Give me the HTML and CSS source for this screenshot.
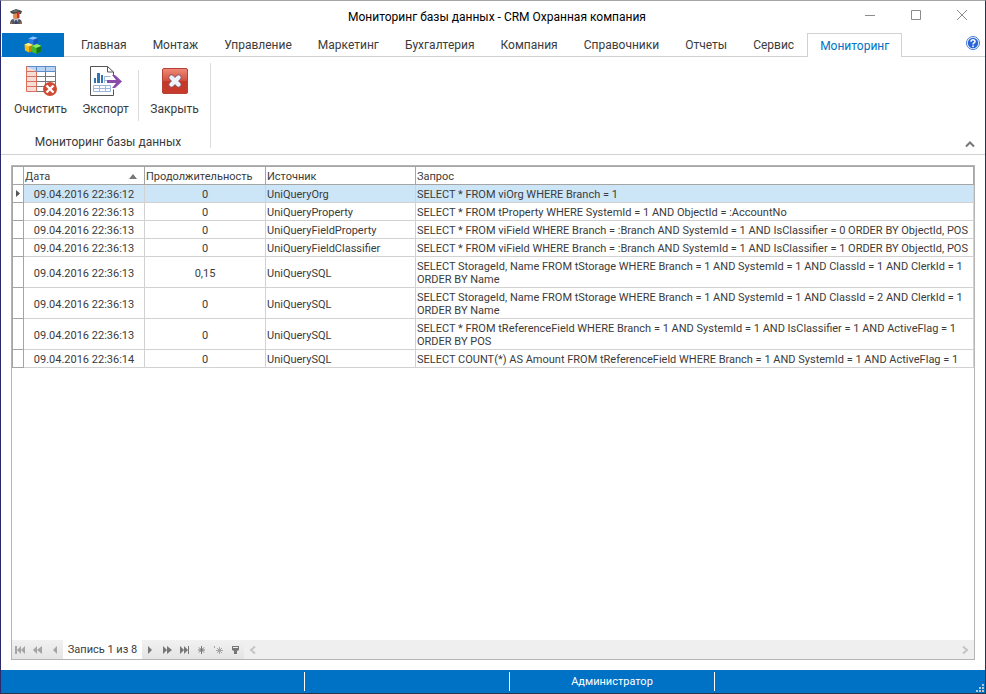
FILE: index.html
```html
<!DOCTYPE html>
<html lang="ru">
<head>
<meta charset="utf-8">
<title>Мониторинг базы данных - CRM Охранная компания</title>
<link rel="stylesheet" href="styles.css">
</head>
<body>
<div class="window">
  <header class="titlebar">
    <svg class="app-icon" width="14" height="16" viewBox="0 0 14 16" aria-hidden="true">
      <path d="M1 15c0-4 2-5.500 6-5.500s6 1.500 6 5.500z" fill="#585860"/>
      <path d="M4 9.500h6L7 15z" fill="#b8c4e0"/><path d="M6.300 11h1.400l.5 4H5.800z" fill="#30406c"/>
      <path d="M1 13h2v2H1zM11 13h2v2h-2z" fill="#8a6c5c"/>
      <rect x="4" y="4" width="6" height="6" rx="2.500" fill="#e58a56"/>
      <path d="M8 4h2.500v5H8z" fill="#c03a20"/>
      <path d="M1 2.500 7 0l6 2-1 3-4-.8-4 .8-2-1z" fill="#484848"/>
      <path d="M3 2.500 7 1l3 1-4 1z" fill="#777"/>
      <path d="M9 3h2v2H9z" fill="#e03020"/>
    </svg>
    <h1 class="title">Мониторинг базы данных - CRM Охранная компания</h1>
    <div class="window-controls">
      <button type="button" aria-label="Свернуть"><svg width="12" height="12" viewBox="0 0 12 12"><path d="M1 6.500h10"/></svg></button>
      <button type="button" aria-label="Развернуть"><svg width="12" height="12" viewBox="0 0 12 12"><path d="M1.500 1.500h9v9h-9z"/></svg></button>
      <button type="button" aria-label="Закрыть окно"><svg width="12" height="12" viewBox="0 0 12 12"><path d="m1 1 10 10M11 1 1 11"/></svg></button>
    </div>
  </header>

  <nav class="tabs">
    <button type="button" class="app-button" aria-label="Меню">
      <svg width="18" height="18" viewBox="0 0 18 18">
        <path d="m4.500 2.500 4.500-2 5 1.500.5 5-5 2-4.500-2z" fill="#2879df"/><path d="m4.500 2.500 4.500-2 5 1.500-4.500 1.800z" fill="#8ac2ff"/><path d="M9.500 3.800 14 2l.5 5-5 2z" fill="#1457bb"/>
        <path d="m.5 8.500 4-1.500 4.500 2v5.500l-4 2-4-2z" fill="#f3bd18"/><path d="m.5 8.500 4-1.500L9 9l-4 1.500z" fill="#fff08a"/><path d="m5 10.500 4-1.500v5.500l-4 2z" fill="#bd8209"/>
        <path d="M8 10 13 8l4.500 2v5l-5 3L8 16z" fill="#42b830"/><path d="M8 10 13 8l4.500 2-5 2z" fill="#8bea6a"/><path d="m12.500 12 5-2v5l-5 3z" fill="#137418"/>
      </svg>
    </button>
    <div class="tab-list">
      <button type="button" class="tab">Главная</button>
      <button type="button" class="tab">Монтаж</button>
      <button type="button" class="tab">Управление</button>
      <button type="button" class="tab">Маркетинг</button>
      <button type="button" class="tab">Бухгалтерия</button>
      <button type="button" class="tab">Компания</button>
      <button type="button" class="tab">Справочники</button>
      <button type="button" class="tab">Отчеты</button>
      <button type="button" class="tab">Сервис</button>
      <button type="button" class="tab active">Мониторинг</button>
    </div>
    <button type="button" class="help" aria-label="Справка">
      <svg width="14" height="14" viewBox="0 0 14 14"><circle cx="7" cy="7" r="6.500" fill="#fff" stroke="#4478d8"/><circle cx="7" cy="7" r="5.200" fill="#2865d6"/><path d="M5 5.800C5 3.200 9.200 3.300 9 5.600 8.900 7 7 6.900 7 8.500" fill="none" stroke="#fff" stroke-width="1.500"/><path d="M6.200 9.500h1.600V11H6.200z" fill="#fff"/></svg>
    </button>
  </nav>

  <section class="ribbon">
    <div class="group">
      <div class="actions">
        <button type="button" class="action">
          <svg width="32" height="32" viewBox="0 0 32 32">
            <path d="M1.500 1.500h29v25h-29z" fill="#fff"/>
            <path d="M1 1h10v25H1z" fill="#f8ddd6"/><path d="M1 1h30v5H11z" fill="#b9d3f3"/>
            <path d="M11 11.500h20M11 16.500h20M11 21.500h20M11 26.500h10M20.500 6v20M30.500 6v15" fill="none" stroke="#777"/>
            <path d="M2 1.500h28.500v5H11M11.500 1.500v5M20.500 1.500v5" fill="none" stroke="#5b8dcc"/>
            <path d="M1.500 1v25.500h10v-20M1 6.500h10M1 11.500h10M1 16.500h10M1 21.500h10" fill="none" stroke="#d9705f"/>
            <circle cx="25" cy="24" r="7" fill="#d04a32"/><path d="m21.500 20.500 7 7m0-7-7 7" stroke="#fff" stroke-width="2.400"/>
          </svg>
          <span>Очистить</span>
        </button>
        <button type="button" class="action">
          <svg width="32" height="32" viewBox="0 0 32 32">
            <path d="M23.500 11V7l-6-5.500H.5v29h23v-6M17.500 1.500V7h6" fill="none" stroke="#555"/>
            <path d="M4 13h2v5H4zM7 8h3v10H7zM11 10h2v8h-2z" fill="#2f75b5"/>
            <path d="M3.500 20.500h17v6h-17zM3.500 23.500h17M9.500 20.500v6M15.500 20.500v6M14.500 18v-6.500h6M14.500 15.500h4" fill="none" stroke="#9bb5dc"/>
            <path d="M17 15h9l-4-5h3l7 6.500-7 6.500h-3l4-5h-9z" fill="#8b4bad"/>
          </svg>
          <span>Экспорт</span>
        </button>
        <div class="separator"></div>
        <button type="button" class="action">
          <svg width="32" height="32" viewBox="0 0 32 32">
            <defs><linearGradient id="red" x2="0" y2="1"><stop stop-color="#ef8b79"/><stop offset=".48" stop-color="#d3503f"/><stop offset=".52" stop-color="#c43729"/><stop offset="1" stop-color="#c73c2c"/></linearGradient></defs>
            <rect x="3.500" y="3.500" width="25" height="25" rx="1.500" fill="url(#red)" stroke="#b74134"/>
            <path d="m12.500 12.500 7 7m0-7-7 7" stroke="#8c5a66" stroke-width="6" stroke-linecap="round"/>
            <path d="m12.500 12.500 7 7m0-7-7 7" stroke="#eef2fb" stroke-width="4.400" stroke-linecap="round"/>
          </svg>
          <span>Закрыть</span>
        </button>
      </div>
      <div class="group-name">Мониторинг базы данных</div>
    </div>
    <button type="button" class="collapse" aria-label="Свернуть ленту"><svg width="10" height="8" viewBox="0 0 10 8"><path d="m1 6.500 4-4 4 4" fill="none" stroke="#777" stroke-width="2"/></svg></button>
  </section>

  <main class="content">
    <div class="grid">
      <table>
        <colgroup><col class="c-mark"><col class="c-date"><col class="c-time"><col class="c-source"><col></colgroup>
        <thead>
          <tr><th></th><th><div class="sorted">Дата<svg width="8" height="5" viewBox="0 0 8 5"><path d="m4 0 4 5H0z" fill="#777"/></svg></div></th><th>Продолжительность</th><th>Источник</th><th>Запрос</th></tr>
        </thead>
        <tbody>
          <tr class="selected"><td><svg width="4" height="7" viewBox="0 0 4 7"><path d="m0 0 4 3.500L0 7z" fill="#555"/></svg></td><td>09.04.2016 22:36:12</td><td>0</td><td>UniQueryOrg</td><td>SELECT * FROM viOrg WHERE Branch = 1</td></tr>
          <tr><td></td><td>09.04.2016 22:36:13</td><td>0</td><td>UniQueryProperty</td><td>SELECT * FROM tProperty WHERE SystemId = 1 AND ObjectId = :AccountNo</td></tr>
          <tr><td></td><td>09.04.2016 22:36:13</td><td>0</td><td>UniQueryFieldProperty</td><td>SELECT * FROM viField WHERE Branch = :Branch AND SystemId = 1 AND IsClassifier = 0 ORDER BY ObjectId, POS</td></tr>
          <tr><td></td><td>09.04.2016 22:36:13</td><td>0</td><td>UniQueryFieldClassifier</td><td>SELECT * FROM viField WHERE Branch = :Branch AND SystemId = 1 AND IsClassifier = 1 ORDER BY ObjectId, POS</td></tr>
          <tr><td></td><td>09.04.2016 22:36:13</td><td>0,15</td><td>UniQuerySQL</td><td>SELECT StorageId, Name FROM tStorage WHERE Branch = 1 AND SystemId = 1 AND ClassId = 1 AND ClerkId = 1<br>ORDER BY Name</td></tr>
          <tr><td></td><td>09.04.2016 22:36:13</td><td>0</td><td>UniQuerySQL</td><td>SELECT StorageId, Name FROM tStorage WHERE Branch = 1 AND SystemId = 1 AND ClassId = 2 AND ClerkId = 1<br>ORDER BY Name</td></tr>
          <tr><td></td><td>09.04.2016 22:36:13</td><td>0</td><td>UniQuerySQL</td><td>SELECT * FROM tReferenceField WHERE Branch = 1 AND SystemId = 1 AND IsClassifier = 1 AND ActiveFlag = 1<br>ORDER BY POS</td></tr>
          <tr><td></td><td>09.04.2016 22:36:14</td><td>0</td><td>UniQuerySQL</td><td>SELECT COUNT(*) AS Amount FROM tReferenceField WHERE Branch = 1 AND SystemId = 1 AND ActiveFlag = 1</td></tr>
        </tbody>
      </table>
      <div class="navigator">
        <div class="nav-buttons">
          <button type="button" disabled aria-label="Первая"><svg width="11" height="8" viewBox="0 0 11 8"><path d="M0 0h2v8H0zM6 0v8L2 4zM10 0v8L6 4z"/></svg></button>
          <button type="button" disabled aria-label="Предыдущая страница"><svg width="11" height="8" viewBox="0 0 11 8"><path d="M5 0v8L1 4zM10 0v8L5 4z"/></svg></button>
          <button type="button" disabled aria-label="Предыдущая"><svg width="11" height="8" viewBox="0 0 11 8"><path d="M8 0v8L4 4z"/></svg></button>
        </div>
        <div class="record">Запись 1 из 8</div>
        <div class="nav-buttons">
          <button type="button" aria-label="Следующая"><svg width="11" height="8" viewBox="0 0 11 8"><path d="M3 0v8l4-4z"/></svg></button>
          <button type="button" aria-label="Следующая страница"><svg width="11" height="8" viewBox="0 0 11 8"><path d="M1 0v8l4-4zM5 0v8l5-4z"/></svg></button>
          <button type="button" aria-label="Последняя"><svg width="11" height="8" viewBox="0 0 11 8"><path d="M1 0v8l4-4zM5 0v8l4-4zM9 0h1v8H9z"/></svg></button>
          <button type="button" aria-label="Сохранить закладку"><svg width="11" height="8" viewBox="0 0 11 8"><path d="M5.500 0v8M2 4h7M3 1.500l5 5M8 1.500l-5 5" class="line"/></svg></button>
          <button type="button" disabled aria-label="Перейти к закладке"><svg width="11" height="8" viewBox="0 0 11 8"><path d="M6.500 1v7M3 4.500h7M4 2l5 5M9 2 4 7M1.500 0v2" class="line"/></svg></button>
          <button type="button" aria-label="Фильтр"><svg width="11" height="8" viewBox="0 0 11 8"><path d="M2 0h7v4L7 5v3H4V5L2 4zM3 1v1h5V1z" fill-rule="evenodd"/></svg></button>
        </div>
        <div class="scrollbar">
          <button type="button" disabled aria-label="Прокрутить влево"><svg width="7" height="8" viewBox="0 0 7 8"><path d="M6 .5 2 4l4 3.500" class="chevron"/></svg></button>
          <button type="button" disabled aria-label="Прокрутить вправо"><svg width="7" height="8" viewBox="0 0 7 8"><path d="M1 .5 5 4 1 7.500" class="chevron"/></svg></button>
        </div>
      </div>
    </div>
  </main>

  <footer class="status">
    <div class="panel wide"></div>
    <div class="panel"></div>
    <div class="panel">Администратор</div>
    <svg class="grip" width="9" height="9" viewBox="0 0 9 9" aria-hidden="true"><path d="M6 0h2v2H6zM3 3h2v2H3zM6 3h2v2H6zM0 6h2v2H0zM3 6h2v2H3zM6 6h2v2H6z" fill="#b9c6d3"/></svg>
  </footer>
</div>
</body>
</html>
```
FILE: styles.css
```css
* { box-sizing: border-box; }
body {
  margin: 0;
  font-family: Roboto, "Noto Sans", sans-serif;
  font-size: 12px;
  color: #3b3b3b;
}
button {
  margin: 0;
  padding: 0;
  border: 0;
  background: none;
  font: inherit;
  color: inherit;
}
svg { display: block; flex: none; }

.window {
  display: flex;
  flex-direction: column;
  min-height: 100vh;
  background: #fff;
  border: 1px solid #2b2b6b;
  border-top-color: #a5a5a5;
  border-right-color: #28344c;
  border-bottom-color: #28344c;
}

.titlebar {
  display: grid;
  grid-template-columns: 1fr auto 1fr;
  align-items: center;
  height: 32px;
  padding-left: 8px;
}
.title {
  margin: 0;
  font-size: 12px;
  font-weight: 400;
  line-height: 16px;
  color: #000;
}
.window-controls {
  display: flex;
  align-self: start;
  justify-content: flex-end;
}
.window-controls button {
  display: grid;
  place-items: center;
  width: 46px;
  height: 28px;
}
.window-controls path { fill: none; stroke: #8c8c8c; }

.tabs {
  display: flex;
  height: 24px;
  padding-left: 1px;
  box-shadow: inset 0 -1px #d2d2d2;
}
.app-button {
  display: grid;
  place-items: center;
  width: 62px;
  background: #0072c6;
}
.tab-list { display: flex; flex: 1; padding-left: 4px; }
.tab { padding: 0 13px; line-height: 24px; }
.tab.active {
  padding: 0 12px;
  border: 1px solid #d2d2d2;
  border-bottom: 0;
  background: #fff;
  color: #0072c6;
}
.help { padding-right: 5px; align-self: flex-start; padding-top: 3px; }

.ribbon {
  display: flex;
  justify-content: space-between;
  height: 98px;
  padding: 6px 10px 6px 5px;
  border-bottom: 1px solid #d2d2d2;
}
.group {
  display: flex;
  flex-direction: column;
  justify-content: space-between;
  width: 205px;
  border-right: 1px solid #dcdcdc;
}
.actions { display: flex; align-items: flex-end; padding-left: 2px; }
.action {
  display: flex;
  flex-direction: column;
  align-items: center;
  gap: 4px;
  width: 65px;
  padding: 2px 0 4px;
  line-height: 16px;
}
.separator {
  width: 1px;
  height: 51px;
  margin-right: 3px;
  background: #dcdcdc;
}
.group-name { text-align: center; line-height: 12px; }
.collapse { align-self: flex-end; }

.content { display: flex; flex: 1; padding: 10px; }
.grid {
  display: flex;
  flex: 1;
  flex-direction: column;
  justify-content: space-between;
  min-width: 0;
  border: 1px solid #b4b4b4;
  font-size: 11px;
  line-height: 13px;
}
table {
  width: 100%;
  table-layout: fixed;
  border-collapse: collapse;
}
.c-mark { width: 11px; }
.c-date, .c-time { width: 121px; }
.c-source { width: 150px; }
th, td {
  padding: 3px 1px 1px;
  border: 1px solid #d2d2d2;
  font-weight: 400;
  text-align: left;
  white-space: nowrap;
}
th { border-color: #a5a5a5; }
td:first-child { border-color: #a5a5a5; padding: 0 3px; }
td:nth-child(2), td:nth-child(3) { text-align: center; }
.sorted {
  display: flex;
  align-items: center;
  justify-content: space-between;
  padding-right: 6px;
}
.selected td:not(:first-child) { background: #cde6f7; }

.navigator { display: flex; height: 19px; background: #efefef; }
.nav-buttons {
  display: flex;
  background: linear-gradient(#f1f1f1, #e4e4e4);
}
.nav-buttons button {
  display: grid;
  place-items: center;
  width: 17px;
}
.nav-buttons path { fill: #777; }
.nav-buttons .line { fill: none; stroke: #777; }
.nav-buttons button:disabled { opacity: 0.6; }
.record {
  width: 79px;
  background: #fff;
  line-height: 20px;
  text-align: center;
}
.scrollbar {
  display: flex;
  flex: 1;
  align-items: center;
  justify-content: space-between;
  padding: 0 5px;
}
.chevron { fill: none; stroke: #c4c4c4; stroke-width: 2; }

.status {
  display: flex;
  align-items: center;
  height: 23px;
  background: #0072c6;
  color: #fff;
  font-size: 11px;
}
.panel {
  width: 205px;
  height: 19px;
  border-right: 1px solid #fff;
  line-height: 20px;
  text-align: center;
}
.panel.wide { width: 304px; }
.grip { align-self: flex-end; margin-left: auto; }
```
